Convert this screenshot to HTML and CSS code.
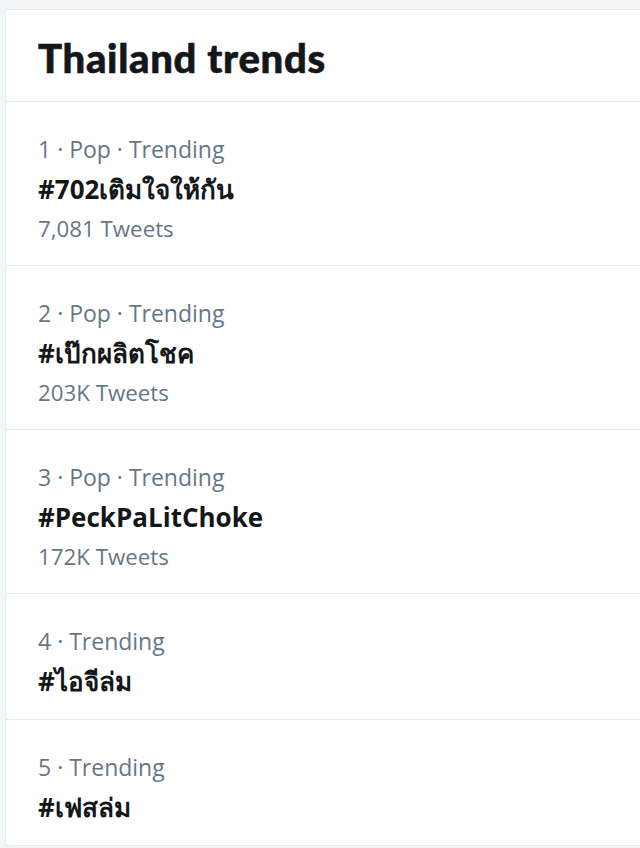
FILE: index.html
```html
<!DOCTYPE html>
<html lang="th">
<head>
<meta charset="utf-8">
<title>Thailand trends</title>
<link rel="stylesheet" href="styles.css">
</head>
<body>
<section class="card">
  <header class="card-head">
    <h2 class="card-title">Thailand trends</h2>
  </header>
  <div class="trend">
    <div class="meta">1 · Pop · Trending</div>
    <div class="name">#702เติมใจให้กัน</div>
    <div class="count">7,081 Tweets</div>
  </div>
  <div class="trend">
    <div class="meta">2 · Pop · Trending</div>
    <div class="name">#เป๊กผลิตโชค</div>
    <div class="count">203K Tweets</div>
  </div>
  <div class="trend">
    <div class="meta">3 · Pop · Trending</div>
    <div class="name">#PeckPaLitChoke</div>
    <div class="count">172K Tweets</div>
  </div>
  <div class="trend">
    <div class="meta">4 · Trending</div>
    <div class="name">#ไอจีล่ม</div>
  </div>
  <div class="trend">
    <div class="meta">5 · Trending</div>
    <div class="name">#เฟสล่ม</div>
  </div>
</section>
</body>
</html>
```

FILE: styles.css
```css
html, body {
  margin: 0;
  padding: 0;
  background: #f3f6f8;
}
body {
  height: 848px;
  overflow: hidden;
  font-family: "Open Sans", "Noto Sans", "DejaVu Sans", sans-serif;
}
.card {
  margin: 9px 0 0 5px;
  background: #fff;
  border-top: 1px solid #e6ecf0;
  border-left: 1px solid #e6ecf0;
}
.card-head {
  height: 92px;
  box-sizing: border-box;
  border-bottom: 1px solid #e6ecf0;
  padding: 4px 0 0 32px;
  display: flex;
  align-items: center;
}
.card-title {
  margin: 0;
  font-family: "Lato", "Open Sans", sans-serif;
  font-weight: 900;
  font-size: 40px;
  color: #14171a;
  letter-spacing: 0.7px;
  -webkit-text-stroke: 0.6px #14171a;
}
.trend {
  border-bottom: 1px solid #e6ecf0;
  padding: 27px 0 17px 32px;
}
.meta {
  font-size: 23px;
  line-height: 40px;
  color: #657786;
}
.name {
  font-size: 26px;
  line-height: 42px;
  font-weight: 700;
  color: #14171a;
  margin-top: -1px;
}
.count {
  font-size: 22.3px;
  line-height: 38px;
  color: #657786;
}
```
